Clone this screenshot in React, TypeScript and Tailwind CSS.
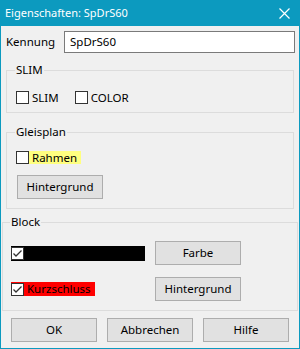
import React from 'react'

const font = { fontFamily: '"Segoe UI", "Noto Sans", sans-serif' }

function Box({ checked }: { checked?: boolean }) {
  return (
    <span className="flex h-[13px] w-[13px] shrink-0 items-center justify-center border border-[#333333] bg-white">
      {checked && (
        <svg width="11" height="11" viewBox="0 0 11 11">
          <polyline points="1.5,5.5 4,8 9.5,2.5" fill="none" stroke="#333333" strokeWidth="1.3" />
        </svg>
      )}
    </span>
  )
}

function Btn({ children, className = '' }: { children: React.ReactNode; className?: string }) {
  return (
    <button className={`flex h-[24px] w-[86px] items-center justify-center border border-[#adadad] bg-[#e1e1e1] text-[11.5px] text-black ${className}`}>
      {children}
    </button>
  )
}

function Group({ label, labelLeft, className, children }: { label: string; labelLeft: string; className: string; children: React.ReactNode }) {
  return (
    <div className={`relative border border-[#dcdcdc] ${className}`}>
      <span className={`absolute -top-[9px] bg-[#f0f0f0] px-[1px] text-[11.5px] leading-[16px] ${labelLeft}`}>{label}</span>
      {children}
    </div>
  )
}

export default function App() {
  return (
    <div className="flex h-[349px] w-[300px] flex-col border-x border-b border-[#0c9abf] bg-[#f0f0f0] text-[11.5px] text-black" style={font}>
      {/* title bar */}
      <div className="-mx-[1px] flex h-[26px] shrink-0 items-center justify-between bg-[#0c9abf] pl-[5px] pr-[10px] text-[11px] text-white">
        <span>Eigenschaften: SpDrS60</span>
        <svg width="11" height="11" viewBox="0 0 11 11">
          <path d="M0.5 0.5 L10.5 10.5 M10.5 0.5 L0.5 10.5" stroke="white" strokeWidth="1.2" />
        </svg>
      </div>

      {/* Kennung */}
      <div className="mt-[5px] flex h-[22px] items-center">
        <span className="w-[63px] pl-[5px]">Kennung</span>
        <div className="flex h-[22px] w-[231px] items-center border border-[#7a7a7a] bg-white px-[5px]">SpDrS60</div>
      </div>

      <Group label="SLIM" labelLeft="left-[8px]" className="ml-[5px] mt-[17px] h-[43px] w-[288px]">
        <div className="ml-[9px] mt-[20px] flex h-[13px] items-center">
          <Box />
          <span className="ml-[3px]">SLIM</span>
          <span className="ml-[16px]"><Box /></span>
          <span className="ml-[3px]">COLOR</span>
        </div>
      </Group>

      <Group label="Gleisplan" labelLeft="left-[8px]" className="ml-[5px] mt-[19px] h-[77px] w-[288px]">
        <div className="ml-[9px] mt-[18px] flex h-[13px] items-center">
          <Box />
          <span className="flex h-[13px] items-center bg-[#ffff80] pl-[3px] pr-[4px]">Rahmen</span>
        </div>
        <Btn className="ml-[10px] mt-[11px] w-[85px]">Hintergrund</Btn>
      </Group>

      <Group label="Block" labelLeft="left-[7px]" className="ml-[1px] mt-[13px] h-[89px] w-[296px]">
        <div className="mt-[18px] flex items-center">
          <div className="ml-[8px] flex h-[15px] w-[134px] items-center bg-black">
            <Box checked />
          </div>
          <Btn className="ml-[10px]">Farbe</Btn>
        </div>
        <div className="mt-[12px] flex items-center">
          <div className="ml-[8px] flex h-[14px] w-[134px] items-center">
            <div className="flex h-[14px] items-center bg-[#ff0000] pr-[4px]">
              <Box checked />
              <span className="ml-[3px]">Kurzschluss</span>
            </div>
          </div>
          <Btn className="ml-[10px]">Hintergrund</Btn>
        </div>
      </Group>

      <div className="ml-[10px] mt-[7px] flex gap-[10px]">
        <Btn>OK</Btn>
        <Btn>Abbrechen</Btn>
        <Btn>Hilfe</Btn>
      </div>
    </div>
  )
}
